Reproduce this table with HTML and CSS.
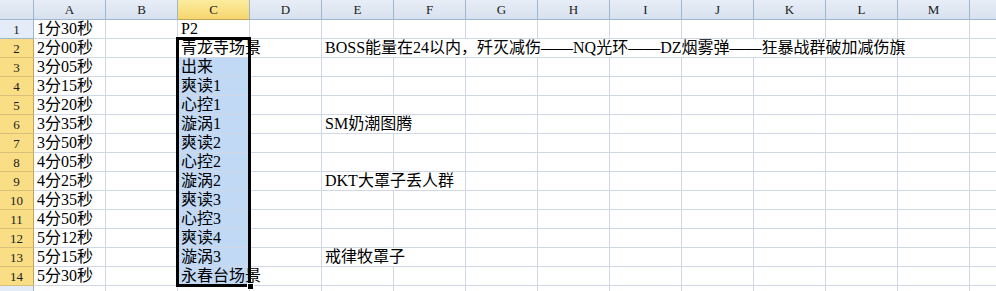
FILE: index.html
```html
<!DOCTYPE html>
<html lang="zh-CN">
<head>
<meta charset="utf-8">
<title>Sheet</title>
<link rel="stylesheet" href="styles.css">
</head>
<body>
<div class="sheet">
  <div class="corner"></div>
  <div class="ch">A</div><div class="ch">B</div><div class="ch on">C</div><div class="ch">D</div><div class="ch">E</div><div class="ch">F</div><div class="ch">G</div><div class="ch">H</div><div class="ch">I</div><div class="ch">J</div><div class="ch">K</div><div class="ch">L</div><div class="ch">M</div><div class="ch"></div>

  <div class="rh">1</div><div class="c">1分30秒</div><div class="c"></div><div class="c">P2</div><div class="c"></div><div class="c"></div><div class="c"></div><div class="c"></div><div class="c"></div><div class="c"></div><div class="c"></div><div class="c"></div><div class="c"></div><div class="c"></div><div class="c"></div>

  <div class="rh on">2</div><div class="c">2分00秒</div><div class="c"></div><div class="c">青龙寺场景</div><div class="c"></div><div class="c span8">BOSS能量在24以内，歼灭减伤——NQ光环——DZ烟雾弹——狂暴战群破加减伤旗</div><div class="c"></div><div class="c"></div>

  <div class="rh on">3</div><div class="c">3分05秒</div><div class="c"></div><div class="c sel">出来</div><div class="c"></div><div class="c"></div><div class="c"></div><div class="c"></div><div class="c"></div><div class="c"></div><div class="c"></div><div class="c"></div><div class="c"></div><div class="c"></div><div class="c"></div>

  <div class="rh on">4</div><div class="c">3分15秒</div><div class="c"></div><div class="c sel">爽读1</div><div class="c"></div><div class="c"></div><div class="c"></div><div class="c"></div><div class="c"></div><div class="c"></div><div class="c"></div><div class="c"></div><div class="c"></div><div class="c"></div><div class="c"></div>

  <div class="rh on">5</div><div class="c">3分20秒</div><div class="c"></div><div class="c sel">心控1</div><div class="c"></div><div class="c"></div><div class="c"></div><div class="c"></div><div class="c"></div><div class="c"></div><div class="c"></div><div class="c"></div><div class="c"></div><div class="c"></div><div class="c"></div>

  <div class="rh on">6</div><div class="c">3分35秒</div><div class="c"></div><div class="c sel">漩涡1</div><div class="c"></div><div class="c span2">SM奶潮图腾</div><div class="c"></div><div class="c"></div><div class="c"></div><div class="c"></div><div class="c"></div><div class="c"></div><div class="c"></div><div class="c"></div>

  <div class="rh on">7</div><div class="c">3分50秒</div><div class="c"></div><div class="c sel">爽读2</div><div class="c"></div><div class="c"></div><div class="c"></div><div class="c"></div><div class="c"></div><div class="c"></div><div class="c"></div><div class="c"></div><div class="c"></div><div class="c"></div><div class="c"></div>

  <div class="rh on">8</div><div class="c">4分05秒</div><div class="c"></div><div class="c sel">心控2</div><div class="c"></div><div class="c"></div><div class="c"></div><div class="c"></div><div class="c"></div><div class="c"></div><div class="c"></div><div class="c"></div><div class="c"></div><div class="c"></div><div class="c"></div>

  <div class="rh on">9</div><div class="c">4分25秒</div><div class="c"></div><div class="c sel">漩涡2</div><div class="c"></div><div class="c span2">DKT大罩子丢人群</div><div class="c"></div><div class="c"></div><div class="c"></div><div class="c"></div><div class="c"></div><div class="c"></div><div class="c"></div><div class="c"></div>

  <div class="rh on">10</div><div class="c">4分35秒</div><div class="c"></div><div class="c sel">爽读3</div><div class="c"></div><div class="c"></div><div class="c"></div><div class="c"></div><div class="c"></div><div class="c"></div><div class="c"></div><div class="c"></div><div class="c"></div><div class="c"></div><div class="c"></div>

  <div class="rh on">11</div><div class="c">4分50秒</div><div class="c"></div><div class="c sel">心控3</div><div class="c"></div><div class="c"></div><div class="c"></div><div class="c"></div><div class="c"></div><div class="c"></div><div class="c"></div><div class="c"></div><div class="c"></div><div class="c"></div><div class="c"></div>

  <div class="rh on">12</div><div class="c">5分12秒</div><div class="c"></div><div class="c sel">爽读4</div><div class="c"></div><div class="c"></div><div class="c"></div><div class="c"></div><div class="c"></div><div class="c"></div><div class="c"></div><div class="c"></div><div class="c"></div><div class="c"></div><div class="c"></div>

  <div class="rh on">13</div><div class="c">5分15秒</div><div class="c"></div><div class="c sel">漩涡3</div><div class="c"></div><div class="c span2">戒律牧罩子</div><div class="c"></div><div class="c"></div><div class="c"></div><div class="c"></div><div class="c"></div><div class="c"></div><div class="c"></div><div class="c"></div>

  <div class="rh on">14</div><div class="c">5分30秒</div><div class="c"></div><div class="c sel">永春台场景</div><div class="c"></div><div class="c"></div><div class="c"></div><div class="c"></div><div class="c"></div><div class="c"></div><div class="c"></div><div class="c"></div><div class="c"></div><div class="c"></div><div class="c"></div>

  <div class="rh"></div><div class="c"></div><div class="c"></div><div class="c"></div><div class="c"></div><div class="c"></div><div class="c"></div><div class="c"></div><div class="c"></div><div class="c"></div><div class="c"></div><div class="c"></div><div class="c"></div><div class="c"></div><div class="c"></div>

  <div class="selbox"><div class="handle"></div></div>
</div>
</body>
</html>
```

FILE: styles.css
```css
html, body {
  margin: 0;
  padding: 0;
  background: #fff;
  overflow: hidden;
}

.sheet {
  position: relative;
  width: 996px;
  height: 291px;
  overflow: hidden;
  display: grid;
  grid-template-columns: 34px repeat(14, 72px);
  grid-template-rows: 20px repeat(15, 19px);
  font-family: "Liberation Serif", "Noto Sans CJK SC", serif;
  color: #000;
}

.corner,
.ch {
  box-sizing: border-box;
  background: linear-gradient(#e8eef7, #d7e1ee);
  border-right: 1px solid #9eb6ce;
  border-bottom: 1px solid #9eb6ce;
}

.ch {
  font-size: 13px;
  line-height: 19px;
  text-align: center;
  color: #1b1b1b;
}

.ch.on {
  background: linear-gradient(#fcec9e, #f6d66f);
  border-bottom-color: #c2a35a;
}

.rh {
  box-sizing: border-box;
  background: #e4ecf7;
  border-right: 1px solid #9eb6ce;
  border-bottom: 1px solid #9eb6ce;
  font-size: 13px;
  line-height: 19px;
  text-align: center;
  color: #1b1b1b;
}

.rh.on {
  background: #f9de85;
  border-right-color: #c2a35a;
  border-bottom-color: #d8bf7a;
}

.c {
  box-sizing: border-box;
  border-right: 1px solid #d0d7e5;
  border-bottom: 1px solid #d0d7e5;
  padding: 0 2px 0 3px;
  font-size: 16px;
  line-height: 18px;
  white-space: nowrap;
  overflow: visible;
  min-width: 0;
}

.c.sel {
  background: #c2d9f5;
}

.c.span2 {
  grid-column: span 2;
}

.c.span8 {
  grid-column: span 8;
}

.selbox {
  position: absolute;
  left: 176px;
  top: 37px;
  width: 75px;
  height: 250px;
  box-sizing: border-box;
  border: 3px solid #000;
  pointer-events: none;
}

.handle {
  position: absolute;
  right: -6px;
  bottom: -6px;
  width: 5px;
  height: 5px;
  background: #000;
  border: 1px solid #fff;
}
```
